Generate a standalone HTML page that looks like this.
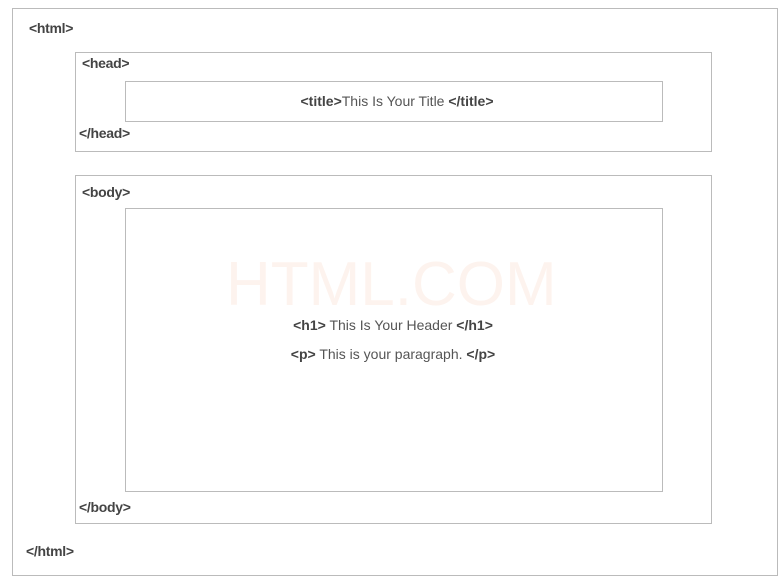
<!DOCTYPE html>
<html><head><style>
body{margin:0;width:780px;height:583px;background:#fff;position:relative;overflow:hidden;font-family:"Liberation Sans",sans-serif;color:#444}
.b{position:absolute;border:1px solid #bbb;box-sizing:border-box}
.t{position:absolute;font-weight:bold;font-size:14px;line-height:16px;letter-spacing:-0.3px}
.c{position:absolute;font-size:14px;line-height:16px;text-align:center;width:100%;color:#555}
.c b{color:#444}
</style></head><body>
<div class="b" style="left:12px;top:8px;width:766px;height:568px"></div>
<div class="b" style="left:75px;top:52px;width:637px;height:100px"></div>
<div class="b" style="left:125px;top:81px;width:538px;height:41px"></div>
<div class="b" style="left:75px;top:175px;width:637px;height:349px"></div>
<div class="b" style="left:125px;top:208px;width:538px;height:284px"></div>
<div style="position:absolute;left:226px;top:254px;font-size:62px;color:#fdf3ee;letter-spacing:0px;line-height:62px">HTML.COM</div>
<div class="t" style="left:29px;top:20px">&lt;html&gt;</div>
<div class="t" style="left:82px;top:55px">&lt;head&gt;</div>
<div class="t" style="left:79px;top:125px">&lt;/head&gt;</div>
<div class="t" style="left:82px;top:184px">&lt;body&gt;</div>
<div class="t" style="left:79px;top:499px">&lt;/body&gt;</div>
<div class="t" style="left:26px;top:543px">&lt;/html&gt;</div>
<div class="c" style="top:93px;left:7px"><b>&lt;title&gt;</b>This Is Your Title <b>&lt;/title&gt;</b></div>
<div class="c" style="top:317px;left:3px"><b>&lt;h1&gt;</b> This Is Your Header <b>&lt;/h1&gt;</b></div>
<div class="c" style="top:346px;left:3px"><b>&lt;p&gt;</b> This is your paragraph. <b>&lt;/p&gt;</b></div>
</body></html>
